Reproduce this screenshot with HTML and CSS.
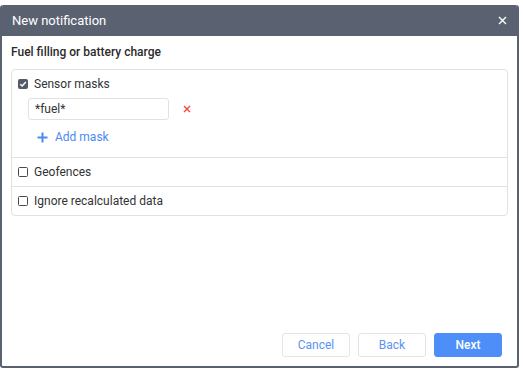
FILE: index.html
```html
<!DOCTYPE html>
<html>
<head>
<meta charset="utf-8">
<link rel="stylesheet" href="styles.css">
</head>
<body>
<div class="dialog">
  <div class="header">
    <span class="title">New notification</span>
    <svg class="close" width="9" height="9" viewBox="0 0 9 9"><path d="M1 1L8 8M8 1L1 8" stroke="#fff" stroke-width="1.4"/></svg>
  </div>
  <div class="body">
    <div class="section-title">Fuel filling or battery charge</div>
    <div class="box">
      <div class="row row-masks">
        <label class="check-line">
          <span class="cb checked"><svg width="10" height="10" viewBox="0 0 10 10"><path d="M2.3 5.2L4.2 7L7.8 3" fill="none" stroke="#fff" stroke-width="1.5"/></svg></span>
          <span>Sensor masks</span>
        </label>
        <div class="mask-line">
          <div class="input">*fuel*</div>
          <svg class="remove" width="8" height="8" viewBox="0 0 8 8"><path d="M1 1L7 7M7 1L1 7" stroke="#f44c4c" stroke-width="1.5"/></svg>
        </div>
        <div class="add-mask">
          <svg width="11" height="11" viewBox="0 0 11 11"><path d="M5.5 0.5V10.5M0.5 5.5H10.5" stroke="#4a8af4" stroke-width="2"/></svg>
          <span>Add mask</span>
        </div>
      </div>
      <div class="row">
        <label class="check-line">
          <span class="cb"></span>
          <span>Geofences</span>
        </label>
      </div>
      <div class="row">
        <label class="check-line">
          <span class="cb"></span>
          <span>Ignore recalculated data</span>
        </label>
      </div>
    </div>
  </div>
  <div class="footer">
    <button class="btn">Cancel</button>
    <button class="btn">Back</button>
    <button class="btn primary">Next</button>
  </div>
</div>
</body>
</html>
```
FILE: styles.css
```css
html, body {
  margin: 0;
  padding: 0;
  background: #fff;
}
body {
  font-family: Roboto, "Liberation Sans", sans-serif;
  color: #333;
  font-size: 12px;
}
.dialog {
  margin-top: 5px;
  width: 519px;
  height: 363px;
  box-sizing: border-box;
  border: 2px solid #5a6272;
  border-top: 0;
  border-radius: 3px;
  display: flex;
  flex-direction: column;
  overflow: hidden;
}
.header {
  height: 31px;
  background: #5a6272;
  display: flex;
  align-items: center;
  justify-content: space-between;
  padding: 0 10px 0 10px;
  flex-shrink: 0;
}
.title {
  color: #fff;
  font-size: 13px;
}
.close {
  display: block;
}
.body {
  flex: 1;
  padding: 8px 9px 0 9px;
}
.section-title {
  font-weight: 500;
  font-size: 12px;
  line-height: 16px;
  margin-bottom: 9px;
  color: #2b2b2b;
}
.box {
  border: 1px solid #e2e2e2;
  border-radius: 4px;
}
.row {
  padding: 6px 6px;
  border-top: 1px solid #e2e2e2;
}
.row:first-child {
  border-top: 0;
}
.row-masks {
  padding-bottom: 9px;
}
.check-line {
  display: flex;
  align-items: center;
  height: 16px;
  gap: 6px;
}
.cb {
  width: 8px;
  height: 8px;
  border: 1px solid #4a4a4a;
  border-radius: 1.5px;
  background: #fff;
  display: flex;
  align-items: center;
  justify-content: center;
}
.cb.checked {
  background: #555b66;
  border-color: #555b66;
}
.cb svg {
  display: block;
  flex-shrink: 0;
}
.mask-line {
  display: flex;
  align-items: center;
  margin-top: 6px;
  padding-left: 10px;
}
.input {
  width: 141px;
  height: 22px;
  box-sizing: border-box;
  border: 1px solid #e2e2e2;
  border-radius: 3px;
  padding: 0 6px;
  line-height: 20px;
  color: #333;
}
.remove {
  margin-left: 14px;
  display: block;
}
.add-mask {
  display: flex;
  align-items: center;
  height: 22px;
  margin-top: 6px;
  padding-left: 19px;
  gap: 7px;
  color: #4a8af4;
}
.add-mask svg {
  display: block;
}
.footer {
  display: flex;
  justify-content: flex-end;
  gap: 8px;
  padding: 0 15px 9px 0;
}
.btn {
  width: 68px;
  height: 24px;
  border: 1px solid #e4e4e4;
  border-radius: 3px;
  background: #fff;
  color: #5b93f0;
  font-family: Roboto, "Liberation Sans", sans-serif;
  font-size: 12px;
  padding: 0;
}
.btn.primary {
  background: #4d8ef9;
  border-color: #4d8ef9;
  color: #fff;
  font-weight: 500;
}
```
